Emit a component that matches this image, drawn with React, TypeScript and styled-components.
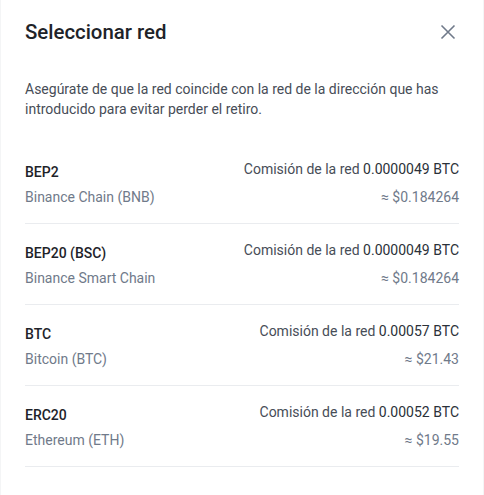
import React from "react";
import styled, { createGlobalStyle } from "styled-components";

const Global = createGlobalStyle`
  html, body { margin: 0; padding: 0; background: #ffffff; }
  body { font-family: Roboto, "Liberation Sans", sans-serif; -webkit-font-smoothing: antialiased; }
  * { box-sizing: border-box; }
`;

const Modal = styled.div`
  width: 484px;
  height: 495px;
  background: #ffffff;
  padding: 18px 24px 0 24px;
  border-left: 1px solid #f4f5f6;
  border-right: 1px solid #f4f5f6;
  display: flex;
  flex-direction: column;
`;

const Header = styled.div`
  display: flex;
  align-items: center;
  justify-content: space-between;
  height: 28px;
`;

const Title = styled.h2`
  margin: 0;
  font-size: 20.4px;
  line-height: 28px;
  font-weight: 500;
  color: #1e2329;
`;

const CloseButton = styled.button`
  border: none;
  background: transparent;
  padding: 0;
  margin-right: -1px;
  width: 24px;
  height: 24px;
  display: flex;
  align-items: center;
  justify-content: center;
  color: #707a8a;
  cursor: pointer;
`;

const Description = styled.p`
  margin: 33px 0 24px 0;
  font-size: 14px;
  line-height: 20px;
  color: #474d57;
`;

const List = styled.div`
  display: flex;
  flex-direction: column;
`;

const Row = styled.div`
  display: flex;
  justify-content: space-between;
  padding: 16px 0;
  border-bottom: 1px solid #eaecef;
`;

const Left = styled.div`
  display: flex;
  flex-direction: column;
`;

const Name = styled.div`
  margin-top: 3px;
  font-size: 14px;
  line-height: 20px;
  font-weight: 500;
  color: #1e2329;
`;

const Sub = styled.div<{ $gap: number }>`
  margin-top: ${(p) => p.$gap}px;
  font-size: 14px;
  line-height: 20px;
  color: #707a8a;
`;

const Right = styled.div`
  display: flex;
  flex-direction: column;
  align-items: flex-end;
`;

const Fee = styled.div`
  font-size: 14px;
  line-height: 20px;
  color: #474d57;
`;

const FeeValue = styled.span`
  color: #2b3139;
`;

const networks = [
  { code: "BEP2", name: "Binance Chain (BNB)", fee: "0.0000049 BTC", usd: "≈ $0.184264" },
  { code: "BEP20 (BSC)", name: "Binance Smart Chain", fee: "0.0000049 BTC", usd: "≈ $0.184264" },
  { code: "BTC", name: "Bitcoin (BTC)", fee: "0.00057 BTC", usd: "≈ $21.43" },
  { code: "ERC20", name: "Ethereum (ETH)", fee: "0.00052 BTC", usd: "≈ $19.55" },
];

export default function App() {
  return (
    <>
      <Global />
      <Modal>
        <Header>
          <Title>Seleccionar red</Title>
          <CloseButton aria-label="Cerrar">
            <svg width="16" height="16" viewBox="0 0 16 16" fill="none">
              <path d="M1.5 1.5 L14.5 14.5 M14.5 1.5 L1.5 14.5" stroke="currentColor" strokeWidth="1.6" />
            </svg>
          </CloseButton>
        </Header>
        <Description>
          Asegúrate de que la red coincide con la red de la dirección que has introducido para evitar perder el retiro.
        </Description>
        <List>
          {networks.map((n) => (
            <Row key={n.code}>
              <Left>
                <Name>{n.code}</Name>
                <Sub $gap={5}>{n.name}</Sub>
              </Left>
              <Right>
                <Fee>
                  Comisión de la red <FeeValue>{n.fee}</FeeValue>
                </Fee>
                <Sub $gap={8}>{n.usd}</Sub>
              </Right>
            </Row>
          ))}
        </List>
      </Modal>
    </>
  );
}
